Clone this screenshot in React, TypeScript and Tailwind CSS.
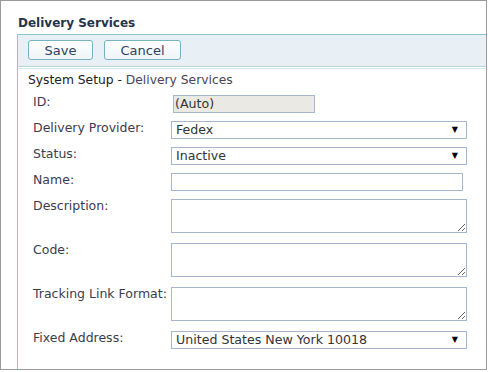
import React from 'react'

const font = { fontFamily: '"DejaVu Sans", Verdana, sans-serif' }

function Select({ value }: { value: string }) {
  return (
    <div className="flex h-[18px] w-[296px] items-center justify-between border border-[#a5b8cf] bg-white pl-[4px] pr-[8px] text-[12.6px] leading-none text-[#333]">
      <span>{value}</span>
      <span className="text-[8px] text-black">▼</span>
    </div>
  )
}

function Row({ label, children, className }: { label: string; children: React.ReactNode; className?: string }) {
  return (
    <div className={`flex items-start ${className ?? ''}`}>
      <div className="w-[138px] -mt-[2px] text-[12.5px] leading-[18px] text-[#3c3c4e]">{label}</div>
      {children}
    </div>
  )
}

export default function App() {
  return (
    <div className="h-[372px] w-[488px] bg-white" style={font}>
      <div className="flex h-[370px] w-[487px] flex-col border border-[#9a9a9a]">
        {/* Title */}
        <div className="h-[33px] pl-[17px] pt-[14px] text-[12px] font-bold leading-[16px] text-[#25354a]">
          Delivery Services
        </div>

        {/* Panel */}
        <div className="ml-[16px] flex-1 border-l border-t border-[#8ec6cf]">
          <div className="flex h-[32px] gap-[11px] border-b border-[#b3d5db] bg-[#e8f0f6] pl-[10px] pt-[5px]">
            <button className="h-[20px] w-[65px] rounded-[3px] border border-[#72b4c4] bg-gradient-to-b from-white to-[#eef4f7] text-[13px] leading-none text-[#2c4260]">
              Save
            </button>
            <button className="h-[20px] w-[77px] rounded-[3px] border border-[#72b4c4] bg-gradient-to-b from-white to-[#eef4f7] text-[13px] leading-none text-[#2c4260]">
              Cancel
            </button>
          </div>
          <div className="mt-[1px] h-[1px] bg-[#d3ebee]" />

          <div className="pl-[10px] pt-[3px] text-[12.3px] leading-[16px] text-[#222]">
            System Setup - <span className="text-[#46465a]">Delivery Services</span>
          </div>

          <div className="mt-[7px] flex flex-col pl-[15px]">
            <Row label="ID:">
              <div className="ml-[2px] flex h-[18px] w-[142px] items-center border border-[#a5b8cf] bg-[#ebe9e3] pl-[1px] text-[12.6px] leading-none text-[#333]">
                (Auto)
              </div>
            </Row>
            <Row label="Delivery Provider:" className="mt-[8px]">
              <Select value="Fedex" />
            </Row>
            <Row label="Status:" className="mt-[8px]">
              <Select value="Inactive" />
            </Row>
            <Row label="Name:" className="mt-[8px]">
              <input className="h-[18px] w-[292px] border border-[#a5b8cf] bg-white outline-none" />
            </Row>
            <Row label="Description:" className="mt-[8px]">
              <textarea className="block h-[34px] w-[296px] border border-[#a5b8cf] bg-white outline-none" />
            </Row>
            <Row label="Code:" className="mt-[10px]">
              <textarea className="block h-[34px] w-[296px] border border-[#a5b8cf] bg-white outline-none" />
            </Row>
            <Row label="Tracking Link Format:" className="mt-[10px]">
              <textarea className="block h-[34px] w-[296px] border border-[#a5b8cf] bg-white outline-none" />
            </Row>
            <Row label="Fixed Address:" className="mt-[10px]">
              <Select value="United States New York 10018" />
            </Row>
          </div>
        </div>
      </div>
    </div>
  )
}
